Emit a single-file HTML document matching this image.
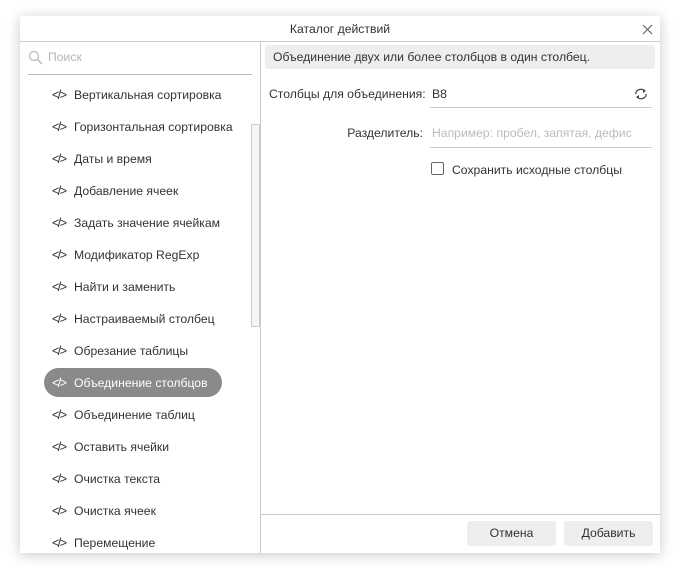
<!DOCTYPE html><html><head><meta charset="utf-8"><style>
body{margin:0;width:680px;height:578px;background:#fff;font-family:"Liberation Sans",sans-serif;font-size:12.2px;color:#333;position:relative;overflow:hidden}
.dlg{position:absolute;left:20px;top:16px;width:640px;height:537px;background:#fff;box-shadow:0 2px 12px rgba(0,0,0,.22);overflow:hidden}
.a{position:absolute;white-space:nowrap}
.item{position:absolute;left:52px;height:16px;line-height:16px}
.item b{font-weight:normal;display:inline-block;width:22px;font-size:12.5px;letter-spacing:-1.5px}
</style></head><body>
<div class="dlg"></div>
<div class="a" style="left:0;width:680px;top:22px;text-align:center">Каталог действий</div>
<svg class="a" style="left:642px;top:24px" width="11" height="11"><path d="M1 1L10 10M10 1L1 10" stroke="#666" stroke-width="1.2"/></svg>
<div class="a" style="left:20px;top:41px;width:640px;height:1px;background:#ccc"></div>
<div class="a" style="left:260px;top:42px;width:1px;height:511px;background:#c8c8c8"></div>
<svg class="a" style="left:28px;top:50px" width="16" height="16"><circle cx="6" cy="6" r="4.5" fill="none" stroke="#bbb" stroke-width="1.3"/><path d="M9.5 9.5L14 14" stroke="#bbb" stroke-width="1.5"/></svg>
<div class="a" style="left:48px;top:50px;color:#b5b5b5">Поиск</div>
<div class="a" style="left:28px;top:74px;width:224px;height:1px;background:#bbb"></div>
<div class="a" style="left:251px;top:124px;width:7px;height:201px;background:#f5f5f5;border:1px solid #ccc;border-radius:1px"></div>
<div class="a" style="left:44px;top:368px;width:178px;height:29px;background:#8a8a8a;border-radius:15px"></div>
<div class="item" style="top:87px"><b>&lt;/&gt;</b>Вертикальная сортировка</div>
<div class="item" style="top:119px"><b>&lt;/&gt;</b>Горизонтальная сортировка</div>
<div class="item" style="top:151px"><b>&lt;/&gt;</b>Даты и время</div>
<div class="item" style="top:183px"><b>&lt;/&gt;</b>Добавление ячеек</div>
<div class="item" style="top:215px"><b>&lt;/&gt;</b>Задать значение ячейкам</div>
<div class="item" style="top:247px"><b>&lt;/&gt;</b>Модификатор RegExp</div>
<div class="item" style="top:279px"><b>&lt;/&gt;</b>Найти и заменить</div>
<div class="item" style="top:311px"><b>&lt;/&gt;</b>Настраиваемый столбец</div>
<div class="item" style="top:343px"><b>&lt;/&gt;</b>Обрезание таблицы</div>
<div class="item" style="top:375px;color:#fff"><b>&lt;/&gt;</b>Объединение столбцов</div>
<div class="item" style="top:407px"><b>&lt;/&gt;</b>Объединение таблиц</div>
<div class="item" style="top:439px"><b>&lt;/&gt;</b>Оставить ячейки</div>
<div class="item" style="top:471px"><b>&lt;/&gt;</b>Очистка текста</div>
<div class="item" style="top:503px"><b>&lt;/&gt;</b>Очистка ячеек</div>
<div class="item" style="top:535px"><b>&lt;/&gt;</b>Перемещение</div>
<div class="a" style="left:265px;top:45px;width:382px;height:24px;background:#eee;border-radius:4px;line-height:24px;padding-left:8px">Объединение двух или более столбцов в один столбец.</div>
<div class="a" style="left:269px;top:87px">Столбцы для объединения:</div>
<div class="a" style="left:432px;top:87px">B8</div>
<svg class="a" style="left:634px;top:87px" width="14" height="14"><path d="M2 7A5 4 0 0 1 11 4M12 7A5 4 0 0 1 3 10" fill="none" stroke="#444" stroke-width="1.3"/><path d="M9 2L12 4L9 6Z M5 8L2 10L5 12Z" fill="#444"/></svg>
<div class="a" style="left:430px;top:107px;width:222px;height:1px;background:#ccc"></div>
<div class="a" style="left:300px;width:123px;text-align:right;top:126px">Разделитель:</div>
<div class="a" style="left:432px;top:126px;color:#bbb">Например: пробел, запятая, дефис</div>
<div class="a" style="left:430px;top:147px;width:222px;height:1px;background:#ccc"></div>
<div class="a" style="left:431px;top:162px;width:11px;height:11px;border:1px solid #666;border-radius:2px"></div>
<div class="a" style="left:452px;top:163px">Сохранить исходные столбцы</div>
<div class="a" style="left:261px;top:514px;width:399px;height:1px;background:#c8c8c8"></div>
<div class="a" style="left:467px;top:521px;width:89px;height:25px;background:#eee;border-radius:3px;text-align:center;line-height:25px">Отмена</div>
<div class="a" style="left:564px;top:521px;width:89px;height:25px;background:#eee;border-radius:3px;text-align:center;line-height:25px">Добавить</div>
</body></html>
